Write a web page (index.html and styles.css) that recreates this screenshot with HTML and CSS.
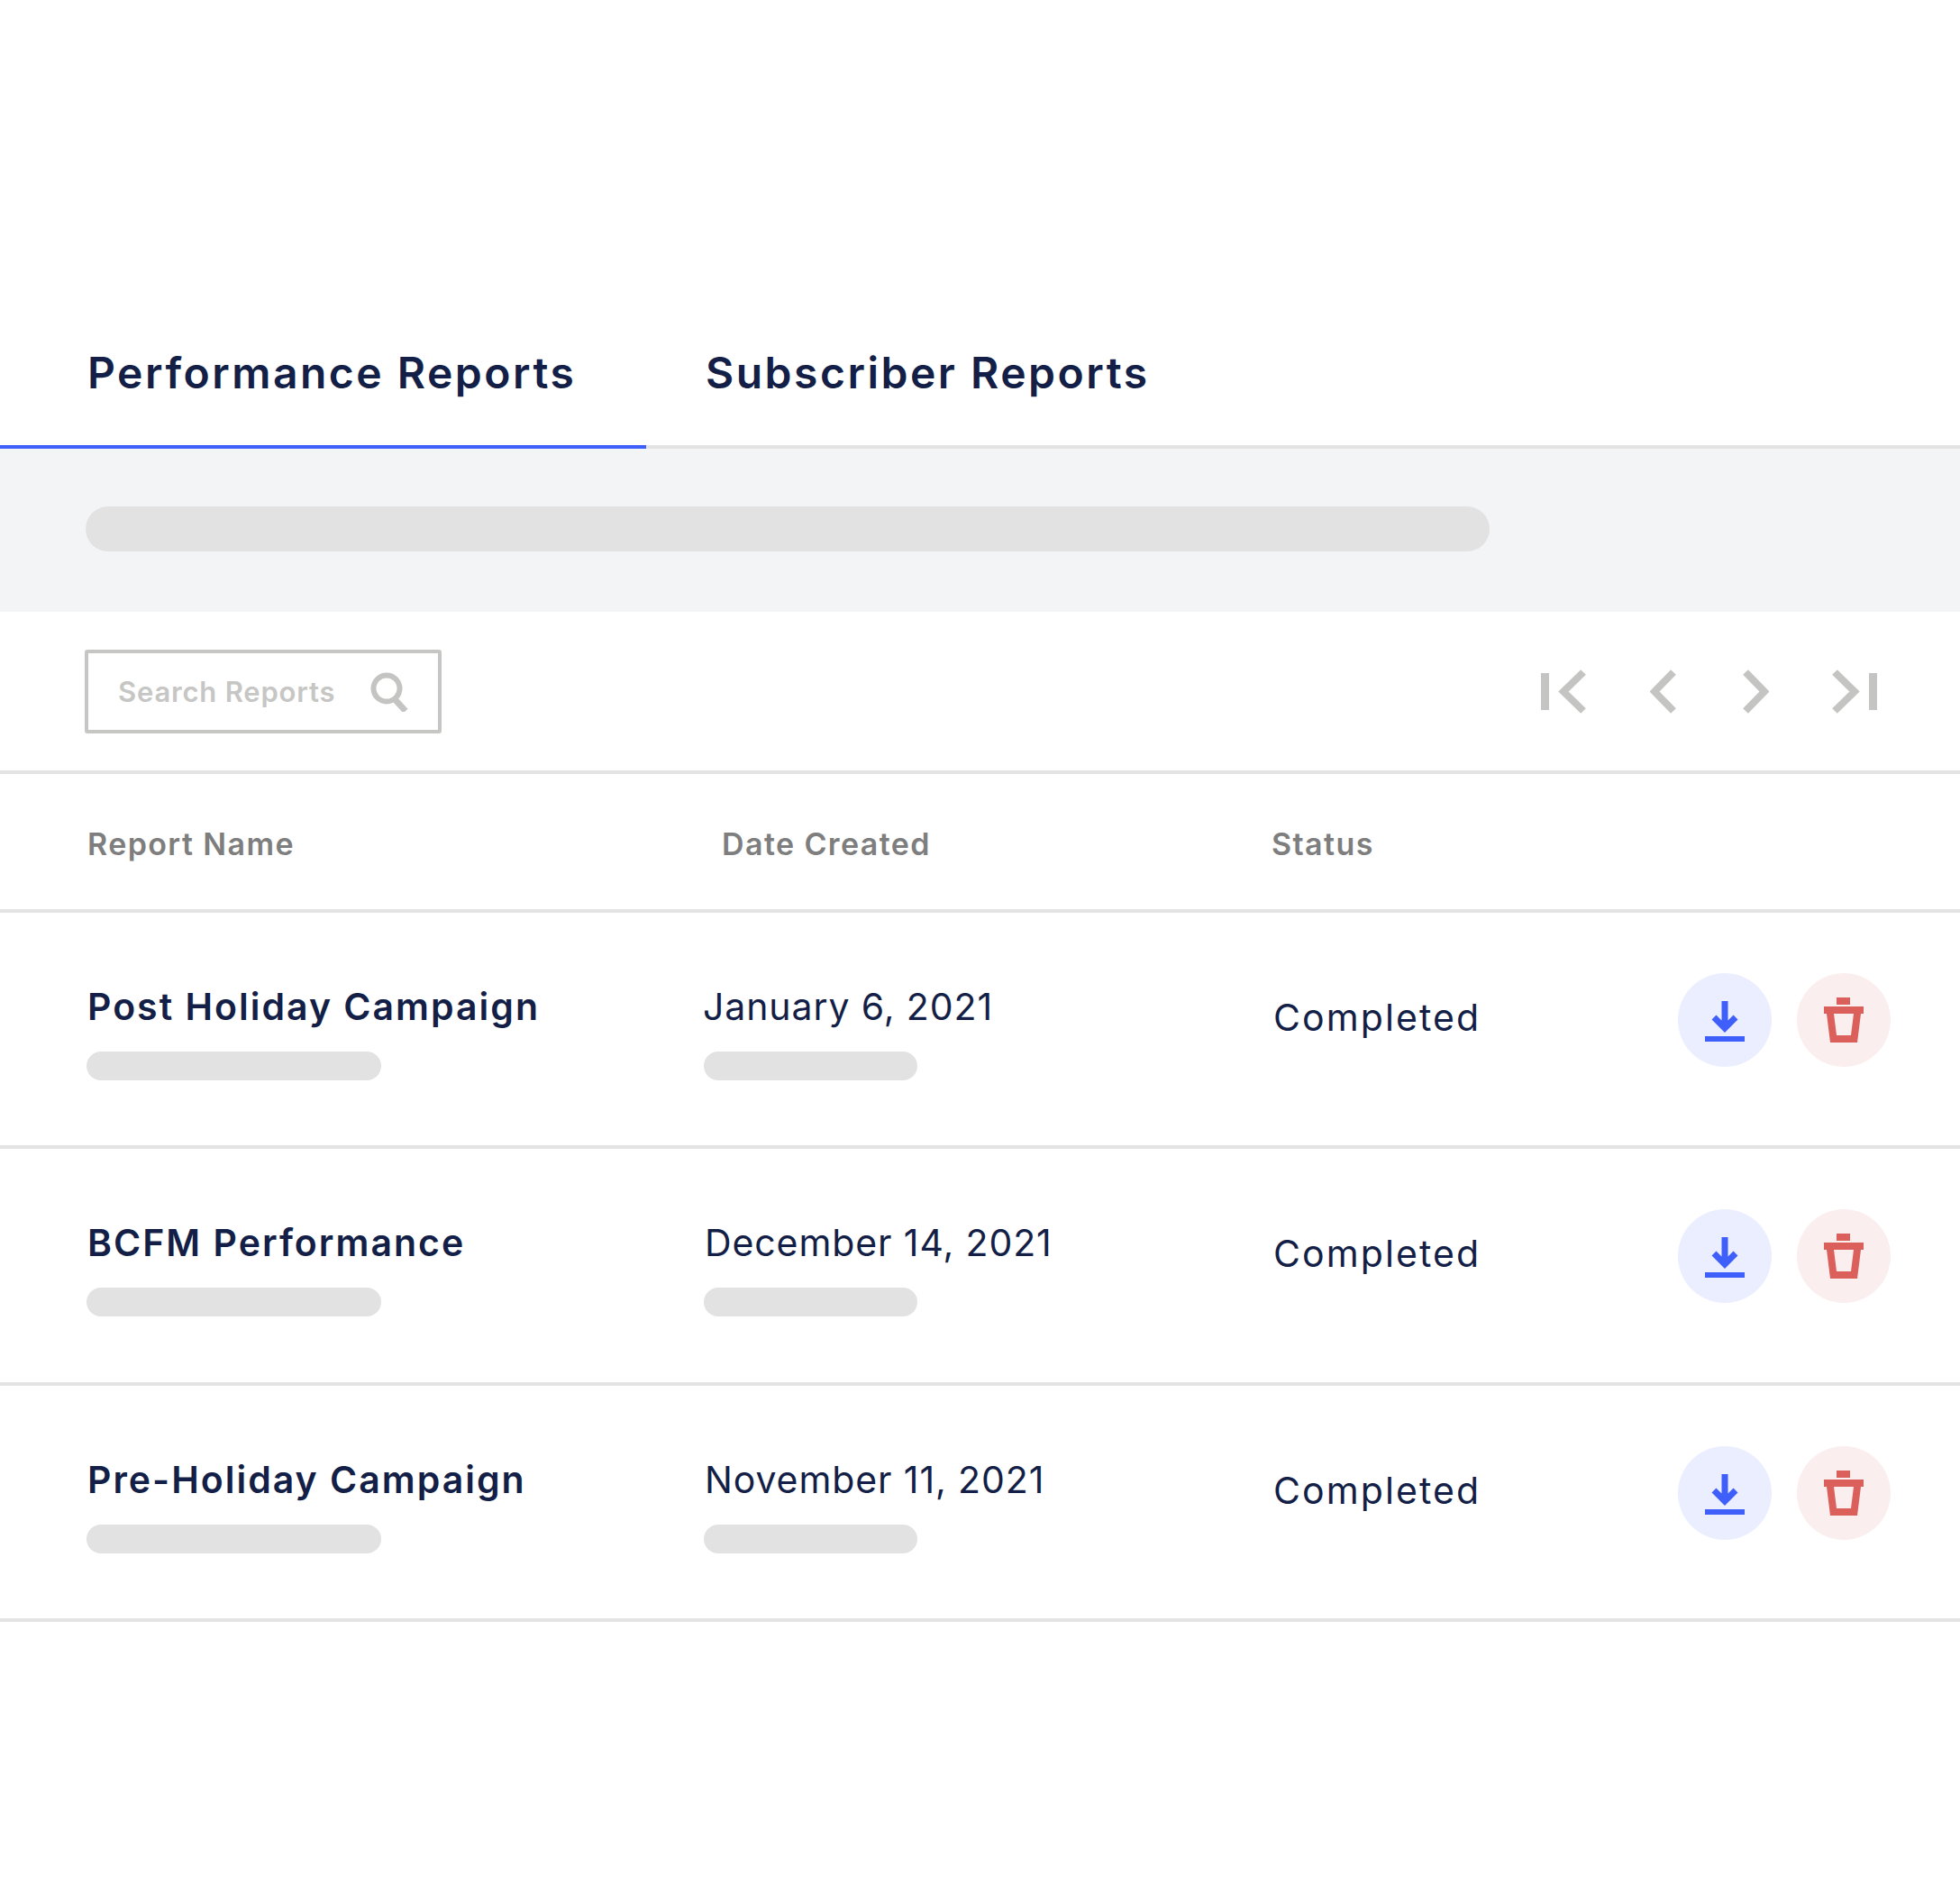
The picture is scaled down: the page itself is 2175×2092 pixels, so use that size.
FILE: index.html
```html
<!DOCTYPE html>
<html lang="en">
<head>
<meta charset="utf-8">
<title>Reports</title>
<link rel="stylesheet" href="styles.css">
</head>
<body>
<main class="page">
  <nav class="tabs">
    <div class="tab tab-active">Performance Reports</div>
    <div class="tab">Subscriber Reports</div>
  </nav>
  <section class="band"><div class="pill pill-band"></div></section>
  <section class="toolbar">
    <div class="search">
      <span class="search-text">Search Reports</span>
      <svg class="search-icon" width="44" height="44" viewBox="0 0 44 44"><circle cx="18" cy="18" r="14.5" fill="none" stroke="#c4c4c2" stroke-width="6"/><path d="M27 30l12 13" fill="none" stroke="#c4c4c2" stroke-width="7"/></svg>
    </div>
    <div class="pager">
      <svg class="pg pg-first" width="54" height="50" viewBox="0 0 54 50"><path d="M0 4h9v41H0z" fill="#c4c4c2"/><path d="M47 3L25 24.500 47 46" fill="none" stroke="#c4c4c2" stroke-width="8"/></svg>
      <svg class="pg pg-prev" width="34" height="50" viewBox="0 0 34 50"><path d="M26 3L5 24.500 26 46" fill="none" stroke="#c4c4c2" stroke-width="8"/></svg>
      <svg class="pg pg-next" width="34" height="50" viewBox="0 0 34 50"><path d="M8 3L29 24.500 8 46" fill="none" stroke="#c4c4c2" stroke-width="8"/></svg>
      <svg class="pg pg-last" width="54" height="50" viewBox="0 0 54 50"><path d="M45 4h9v41h-9z" fill="#c4c4c2"/><path d="M7 3L29 24.500 7 46" fill="none" stroke="#c4c4c2" stroke-width="8"/></svg>
    </div>
  </section>
  <header class="thead">
    <span>Report Name</span>
    <span>Date Created</span>
    <span>Status</span>
  </header>
  <article class="row">
    <div class="cell"><div class="name">Post Holiday Campaign</div><div class="pill pill-name"></div></div>
    <div class="cell"><div class="date date-jan">January 6, 2021</div><div class="pill pill-date"></div></div>
    <div class="status">Completed</div>
    <div class="actions">
      <button class="act act-dl"><svg width="44" height="48" viewBox="0 0 44 48"><path d="M22 3v29M10 21L22 33 34 21" fill="none" stroke="#3f5ffb" stroke-width="7"/><path d="M0 42h44v6H0z" fill="#3f5ffb"/></svg></button>
      <button class="act act-del"><svg width="44" height="50" viewBox="0 0 44 50"><path d="M14 0h15v8H14zM0 10h44v8H0z" fill="#db5f5b"/><path d="M3 18h38l-4 32H7zM11 18l3 24h16l3-24z" fill="#db5f5b" fill-rule="evenodd"/></svg></button>
    </div>
  </article>
  <article class="row">
    <div class="cell"><div class="name">BCFM Performance</div><div class="pill pill-name"></div></div>
    <div class="cell"><div class="date">December 14, 2021</div><div class="pill pill-date"></div></div>
    <div class="status">Completed</div>
    <div class="actions">
      <button class="act act-dl"><svg width="44" height="48" viewBox="0 0 44 48"><path d="M22 3v29M10 21L22 33 34 21" fill="none" stroke="#3f5ffb" stroke-width="7"/><path d="M0 42h44v6H0z" fill="#3f5ffb"/></svg></button>
      <button class="act act-del"><svg width="44" height="50" viewBox="0 0 44 50"><path d="M14 0h15v8H14zM0 10h44v8H0z" fill="#db5f5b"/><path d="M3 18h38l-4 32H7zM11 18l3 24h16l3-24z" fill="#db5f5b" fill-rule="evenodd"/></svg></button>
    </div>
  </article>
  <article class="row">
    <div class="cell"><div class="name">Pre-Holiday Campaign</div><div class="pill pill-name"></div></div>
    <div class="cell"><div class="date">November 11, 2021</div><div class="pill pill-date"></div></div>
    <div class="status">Completed</div>
    <div class="actions">
      <button class="act act-dl"><svg width="44" height="48" viewBox="0 0 44 48"><path d="M22 3v29M10 21L22 33 34 21" fill="none" stroke="#3f5ffb" stroke-width="7"/><path d="M0 42h44v6H0z" fill="#3f5ffb"/></svg></button>
      <button class="act act-del"><svg width="44" height="50" viewBox="0 0 44 50"><path d="M14 0h15v8H14zM0 10h44v8H0z" fill="#db5f5b"/><path d="M3 18h38l-4 32H7zM11 18l3 24h16l3-24z" fill="#db5f5b" fill-rule="evenodd"/></svg></button>
    </div>
  </article>
</main>
</body>
</html>
```
FILE: styles.css
```css
* { box-sizing: border-box; }
html, body { margin: 0; background: #fff; }
body { font-family: Inter, "Liberation Sans", sans-serif; color: #141f47; height: 2092px; overflow: hidden; }
.page { width: 2175px; padding-top: 346px; }
.tabs { display: flex; height: 152px; border-bottom: 4px solid #e3e3e3; }
.tab { font-size: 48px; font-weight: 600; line-height: 136px; letter-spacing: 2.5px; padding: 0 0 0 97px; width: 717px; height: 152px; border-bottom: 4px solid transparent; }
.tab + .tab { padding-left: 66px; width: auto; }
.tab-active { border-bottom-color: #3f5ffb; }
.band { height: 181px; background: #f3f4f6; padding: 64px 0 0 95px; }
.pill { background: #e2e2e2; border-radius: 25px; }
.pill-band { width: 1558px; height: 50px; }
.toolbar { height: 180px; border-bottom: 4px solid #e3e3e3; padding: 42px 92px 0 94px; display: flex; justify-content: space-between; }
.search { width: 396px; height: 93px; border: 4px solid #c6c6c4; border-radius: 3px; display: flex; align-items: center; padding-left: 33px; }
.search-text { font-size: 31px; font-weight: 600; letter-spacing: 0.8px; color: #c6c6c4; width: 280px; flex: none; }
.search-icon { flex: none; }
.pager { display: flex; align-items: flex-start; padding-top: 22px; }
.pg-first { margin-right: 67px; }
.pg-prev { margin-right: 64px; }
.pg-next { margin-right: 66px; }
.thead { display: grid; grid-template-columns: 704px 610px 1fr; height: 154px; border-bottom: 4px solid #e3e3e3; padding: 5px 0 0 97px; align-items: center; font-size: 34px; font-weight: 600; letter-spacing: 1.4px; color: #7e7e7e; }
.row { display: grid; grid-template-columns: 685px 632px 449px 1fr; height: 262.4px; border-bottom: 4px solid #e3e3e3; padding: 67px 0 0 96px; align-items: start; }
.name { font-size: 41px; font-weight: 600; letter-spacing: 2px; line-height: 56px; margin: 9px 0 0 1px; }
.date { font-size: 41px; font-weight: 400; letter-spacing: 0.9px; line-height: 56px; margin: 9px 0 0 1px; }
.date-jan { margin-left: -1px; }
.pill-name { width: 327px; height: 32px; margin-top: 22px; border-radius: 16px; }
.pill-date { width: 237px; height: 32px; margin-top: 22px; border-radius: 16px; }
.status { font-size: 41px; font-weight: 400; letter-spacing: 2.1px; line-height: 56px; padding-top: 21px; }
.actions { display: flex; gap: 28px; }
.act { width: 104px; height: 104px; border-radius: 50%; border: 0; padding: 0; display: flex; align-items: center; justify-content: center; }
.act-dl { background: #ebeefe; }
.act-del { background: #faeeee; }
```
